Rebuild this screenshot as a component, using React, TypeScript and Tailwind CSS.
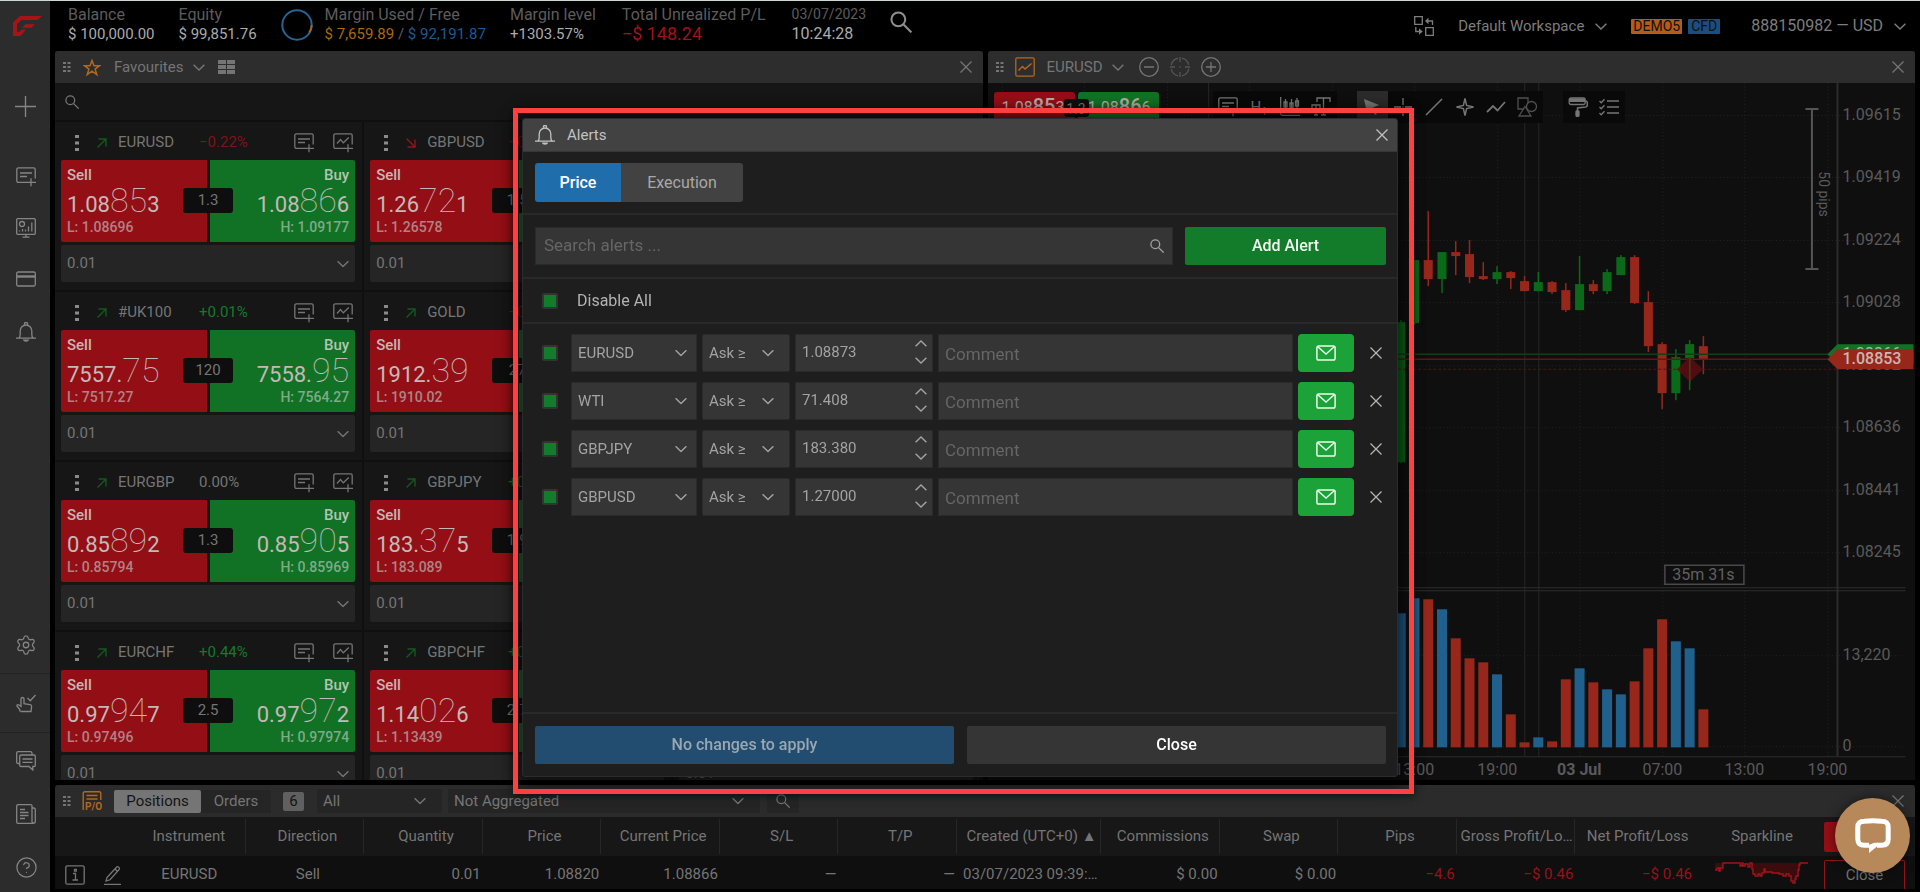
import React from 'react';
import { CircleHelp, Settings } from 'lucide-react';

type IconProps = { className?: string; children?: React.ReactNode };

const Icon = ({ className = 'size-5', children }: IconProps) => (
  <svg
    viewBox="0 0 20 20"
    className={`shrink-0 ${className}`}
    fill="none"
    stroke="currentColor"
    strokeWidth="1.3"
    aria-hidden="true"
  >
    {children}
  </svg>
);

const ChevronIcon = ({ className = '' }: { className?: string }) => (
  <svg viewBox="0 0 12 7" className={`w-3 h-[7px] shrink-0 ${className}`} fill="none" stroke="currentColor" strokeWidth="1.4" aria-hidden="true">
    <path d="M.6 .7l5.4 5.3 5.4-5.3" />
  </svg>
);

const CloseIcon = () => (
  <svg viewBox="0 0 12 12" className="size-3 shrink-0" fill="none" stroke="currentColor" strokeWidth="1.3" aria-hidden="true">
    <path d="M.5 .5l11 11M11.5 .5l-11 11" />
  </svg>
);

const SearchIcon = ({ className = 'size-[14px]' }: { className?: string }) => (
  <svg viewBox="0 0 14 14" className={`shrink-0 ${className}`} fill="none" stroke="currentColor" strokeWidth="1.3" aria-hidden="true">
    <circle cx="5.3" cy="5.3" r="4.4" />
    <path d="M8.6 8.6l5 5" />
  </svg>
);

const NoteIcon = () => (
  <Icon>
    <path d="M11.5 15.4H2.4A1.6 1.6 0 0 1 .8 13.8V2.4A1.6 1.6 0 0 1 2.4.8h15.2a1.6 1.6 0 0 1 1.6 1.6v9" />
    <path d="M4 6h12M4 9.5h7" />
    <path d="M15 11.3v8M11 15.4h9" />
  </Icon>
);

const ChartPlusIcon = () => (
  <Icon>
    <path d="M11.5 15.4H2.4A1.6 1.6 0 0 1 .8 13.8V2.4A1.6 1.6 0 0 1 2.4.8h15.2a1.6 1.6 0 0 1 1.6 1.6v9" />
    <path d="M4 10.5l3.5-4 2.8 3.3 5.5-5.3" />
    <path d="M15 11.3v8M11 15.4h9" />
  </Icon>
);

const BellIcon = () => (
  <Icon>
    <path d="M0 16.2h20M3 16c.9-1 1.2-2 1.2-3.5V8.8a5.8 5.8 0 0 1 11.6 0v3.7c0 1.5.3 2.5 1.2 3.5" />
    <path d="M8.5 2.7V1.5a1.5 1 0 0 1 3 0v1.2" />
    <path d="M6.8 17.6h6.4c-.6 1.5-1.6 2.2-3.2 2.2s-2.6-.7-3.2-2.2z" fill="currentColor" stroke="none" />
  </Icon>
);

const GripIcon = () => (
  <svg viewBox="0 0 8 11" className="w-2 h-[11px] shrink-0" fill="currentColor" aria-hidden="true">
    {[0, 4, 8].map((y) => (
      <g key={y}>
        <rect x="0" y={y} width="3" height="2" />
        <rect x="4.5" y={y} width="3" height="2" />
      </g>
    ))}
  </svg>
);

const DotsIcon = () => (
  <svg viewBox="0 0 4 16" className="w-1 h-4" fill="currentColor" aria-hidden="true">
    <rect y="0" width="4" height="3" />
    <rect y="6.5" width="4" height="3" />
    <rect y="13" width="4" height="3" />
  </svg>
);

const MailIcon = () => (
  <Icon>
    <rect x=".9" y="3" width="18.2" height="14" rx="1.8" strokeWidth="1.5" />
    <path d="M1.5 3.5L10 11l8.5-7.5" strokeWidth="1.5" />
  </Icon>
);

type DropdownProps = { label: string; value: string; className: string; chevron: string };

const Dropdown = ({ label, value, className, chevron }: DropdownProps) => (
  <div className={`relative ${className}`}>
    <select aria-label={label} defaultValue={value} className="size-full appearance-none bg-transparent pl-[6px] outline-none">
      <option>{value}</option>
    </select>
    <ChevronIcon className={`pointer-events-none absolute top-1/2 -translate-y-1/2 ${chevron}`} />
  </div>
);

/* ---------- sidebar ---------- */

const Sidebar = () => (
  <aside className="flex w-[50px] shrink-0 flex-col bg-[#2c2c2c] text-[#858585]">
    <a href="#home" aria-label="Home" className="flex h-[60px] items-start pt-[14px] pl-[12px]">
      <svg viewBox="0 0 30 22" className="w-[30px] h-[22px]" fill="#a81319" aria-hidden="true">
        <path d="M8 1h22l-4.5 4H9.5L5 9v8h2.500l2-2.200h4.500L8.500 21H1V7.500z" />
        <path d="M13.500 9.200h9.500l-3.500 3.600h-9.500z" />
      </svg>
    </a>
    <button aria-label="Add" className="flex h-[90px] items-center justify-center">
      <Icon className="size-[21px]"><path d="M10 0v20M0 10h20" /></Icon>
    </button>
    <button aria-label="New order" className="flex h-[51px] items-center justify-center pl-0.5"><NoteIcon /></button>
    <button aria-label="Reports" className="flex h-[51px] items-center justify-center pl-0.5">
      <Icon>
        <rect x=".7" y=".7" width="18.6" height="15.6" rx="1" />
        <circle cx="6" cy="6" r="2.5" />
        <path d="M3.5 13.5v-1M6.5 13.5v-2.5M9.5 13.5v-2M12.5 13.5V8.5M15.8 13.5V4.5M10 16.5V19M6.5 19.2h7" />
      </Icon>
    </button>
    <button aria-label="Payments" className="flex h-[51px] items-center justify-center pl-0.5">
      <Icon>
        <rect x=".7" y="3" width="18.6" height="14" rx="1.5" />
        <path d="M1 7.5h18" strokeWidth="2.4" />
      </Icon>
    </button>
    <button aria-label="Alerts" className="flex h-[55px] items-center justify-center pl-0.5"><BellIcon /></button>
    <button aria-label="Settings" className="mt-auto flex h-[58px] items-center justify-center border-b border-[#222] pl-0.5">
      <Settings size={22} strokeWidth={1.4} />
    </button>
    <button aria-label="One-click trading" className="flex h-[59px] items-center justify-center border-b border-[#222] pl-0.5">
      <Icon>
        <path d="M4.5 18.5H15l.6-5c.1-1-.5-1.700-1.600-1.900L8 10.700V6a1.500 1.500 0 0 0-3 0v7.500L3 12c-1.600-1-2.700.3-1.700 1.500l2.500 3v2" />
        <path d="M11.500 5l2.800 2.700L19.500 2" />
      </Icon>
    </button>
    <button aria-label="Chat" className="flex h-[53px] items-center justify-center pt-[3px] pl-0.5">
      <Icon>
        <path d="M3.5 12.5H2A1.3 1.3 0 0 1 .7 11.2V2A1.3 1.3 0 0 1 2 .7h12.5A1.5 1.5 0 0 1 16 2.2V4" />
        <path d="M5 4h13a1.3 1.3 0 0 1 1.3 1.3v8.9a1.3 1.3 0 0 1-1.3 1.3h-1.2V19l-3.8-3.500H5a1.3 1.3 0 0 1-1.3-1.3V5.300A1.3 1.3 0 0 1 5 4z" />
        <path d="M6.5 8h10M6.5 11.3h10" />
      </Icon>
    </button>
    <button aria-label="News" className="flex h-[53px] items-center justify-center pt-[3px] pl-0.5">
      <Icon>
        <path d="M16 17.5V2A1.3 1.3 0 0 0 14.7.7H2A1.3 1.3 0 0 0 .7 2v16A1.3 1.3 0 0 0 2 19.3h15.3a2 2 0 0 0 2-2V5.5A1.5 1.5 0 0 0 17.8 4H16M16 17.5a1.7 1.7 0 0 0 2 1.6" />
        <path d="M4 5.5h5M4 8.5h8.5M4 11.5h8.5M4 14.5h5" />
      </Icon>
    </button>
    <button aria-label="Help" className="flex h-[53px] items-center justify-center pt-[3px] pl-0.5">
      <CircleHelp size={23} strokeWidth={1.3} />
    </button>
  </aside>
);

/* ---------- account bar ---------- */

const Stat = ({ label, children }: { label: string; children: React.ReactNode }) => (
  <div>
    <div className="text-base leading-[19px] text-[#5c5c5c]">{label}</div>
    <div className="text-[15px] leading-5 text-[#ababab]">{children}</div>
  </div>
);

const AccountBar = () => (
  <header className="flex h-[50px] shrink-0 items-start gap-6 pt-1 pr-[9px] pl-[13px] whitespace-nowrap">
    <Stat label="Balance">$ 100,000.00</Stat>
    <Stat label="Equity">$ 99,851.76</Stat>
    <div className="flex gap-3">
      <svg viewBox="0 0 32 32" className="mt-1 size-8" fill="none" strokeWidth="2" aria-hidden="true">
        <circle cx="16" cy="16" r="14.7" stroke="#256494" />
        <path d="M30.7 16a14.7 14.7 0 0 1-2.5 7.5" stroke="#a4640f" />
      </svg>
      <Stat label="Margin Used / Free">
        <span className="text-[#a86a0c]">$ 7,659.89</span>
        <span className="text-[#5c5c5c]"> / </span>
        <span className="text-[#1c5a94]">$ 92,191.87</span>
      </Stat>
    </div>
    <div className="flex gap-[26px]">
      <Stat label="Margin level">+1303.57%</Stat>
      <Stat label="Total Unrealized P/L">
        <span className="text-lg leading-5 text-[#a01218]">−$ 148.24</span>
      </Stat>
      <div>
        <div className="text-sm leading-[19px] text-[#5c5c5c]">03/07/2023</div>
        <div className="text-base leading-5 text-[#ababab]">10:24:28</div>
      </div>
    </div>
    <button aria-label="Search" className="mt-[6px] text-[#8f8f8f]"><SearchIcon className="size-[22px]" /></button>
    <div className="ml-auto flex h-[42px] items-center text-[15px] text-[#7d7d7d]">
      <button aria-label="Workspaces">
        <Icon>
          <path d="M.7.7h7.6v7.6H.7zM11.7 11.7h7.6v7.6h-7.6z" />
          <path d="M18.5 9V5H13M1.8 11v4.500h5" />
          <path d="M14.500 1.800v6.400L11 5zM5 12.300v6.400l3.700-3.200z" fill="currentColor" stroke="none" />
        </Icon>
      </button>
      <button className="ml-6 flex items-center gap-[11px]">Default Workspace <ChevronIcon /></button>
      <span className="ml-6 flex h-[15px] items-center rounded-[1px] bg-[#b45c18] px-[2px] text-sm text-[#111]">DEMO5</span>
      <span className="ml-[6px] flex h-[15px] items-center rounded-[1px] bg-[#1a4e80] px-[3px] text-sm text-[#111]">CFD</span>
      <button className="ml-[31px] flex items-center gap-[11px] text-base">888150982 — USD <ChevronIcon /></button>
    </div>
  </header>
);

/* ---------- watchlist ---------- */

type Quote = {
  name: string;
  up: boolean;
  change: string;
  spread: string;
  sell: [string, string, string];
  buy: [string, string, string];
  low: string;
  high: string;
};

const quotes: Quote[] = [
  { name: 'EURUSD', up: true, change: '−0.22%', spread: '1.3', sell: ['1.08', '85', '3'], buy: ['1.08', '86', '6'], low: '1.08696', high: '1.09177' },
  { name: 'GBPUSD', up: false, change: '−0.12%', spread: '1.5', sell: ['1.26', '72', '1'], buy: ['1.26', '73', '6'], low: '1.26578', high: '1.27120' },
  { name: 'USDJPY', up: true, change: '+0.18%', spread: '1.4', sell: ['144.', '60', '2'], buy: ['144.', '61', '6'], low: '144.220', high: '144.910' },
  { name: '#UK100', up: true, change: '+0.01%', spread: '120', sell: ['7557.', '75', ''], buy: ['7558.', '95', ''], low: '7517.27', high: '7564.27' },
  { name: 'GOLD', up: true, change: '−0.39%', spread: '27', sell: ['1912.', '39', ''], buy: ['1912.', '66', ''], low: '1910.02', high: '1922.40' },
  { name: 'WTI', up: true, change: '+0.51%', spread: '4.0', sell: ['71.', '36', '8'], buy: ['71.', '40', '8'], low: '70.120', high: '71.760' },
  { name: 'EURGBP', up: true, change: '0.00%', spread: '1.3', sell: ['0.85', '89', '2'], buy: ['0.85', '90', '5'], low: '0.85794', high: '0.85969' },
  { name: 'GBPJPY', up: true, change: '+0.09%', spread: '1.9', sell: ['183.', '37', '5'], buy: ['183.', '39', '4'], low: '183.089', high: '183.880' },
  { name: 'EURJPY', up: true, change: '−0.04%', spread: '1.6', sell: ['157.', '41', '2'], buy: ['157.', '42', '8'], low: '157.100', high: '157.990' },
  { name: 'EURCHF', up: true, change: '+0.44%', spread: '2.5', sell: ['0.97', '94', '7'], buy: ['0.97', '97', '2'], low: '0.97496', high: '0.97974' },
  { name: 'GBPCHF', up: true, change: '+0.43%', spread: '2.7', sell: ['1.14', '02', '6'], buy: ['1.14', '05', '3'], low: '1.13439', high: '1.14170' },
  { name: 'USDCHF', up: true, change: '+0.62%', spread: '1.8', sell: ['0.89', '97', '1'], buy: ['0.89', '98', '9'], low: '0.89510', high: '0.90020' },
];

const changeColor = (change: string) => {
  if (change.startsWith('−')) return 'text-[#7d1418]';
  return change.startsWith('+') ? 'text-[#157a2c]' : 'text-[#757575]';
};

const Price = ({ parts }: { parts: [string, string, string] }) => (
  <span className="block h-[30px] text-[22px] leading-[30px] text-[#c4b9b9]">
    {parts[0]}
    <span className="text-[34px] leading-[30px] font-thin">{parts[1]}</span>
    {parts[2]}
  </span>
);

const QuoteTile = ({ quote }: { quote: Quote }) => (
  <div className="h-[170px] border-r-2 border-b-2 border-[#0f0f0f] pr-[7px] pl-[6px]">
    <div className="flex h-[38px] items-center pt-[3px] text-[15px] text-[#757575]">
      <button aria-label={`${quote.name} menu`} className="flex w-[31px] justify-center text-[#8a8a8a]"><DotsIcon /></button>
      <svg viewBox="0 0 10 10" className={`mr-[11px] ml-[5px] size-[10px] ${quote.up ? 'text-[#14581f]' : 'text-[#93141a]'}`} fill="none" stroke="currentColor" strokeWidth="1.4" aria-hidden="true">
        <path d={quote.up ? 'M.5 9.5l8.5-8.5M1.5 1H9v7.5' : 'M.5 .5L9 9M9 1.5V9H1.5'} />
      </svg>
      <span className="w-[81px]">{quote.name}</span>
      <span className={changeColor(quote.change)}>{quote.change}</span>
      <button aria-label={`New ${quote.name} order`} className="mr-[19px] ml-auto"><NoteIcon /></button>
      <button aria-label={`Open ${quote.name} chart`} className="mr-[2px]"><ChartPlusIcon /></button>
    </div>
    <div className="relative grid h-[82px] grid-cols-2 gap-[3px]">
      <button className="flex flex-col items-start rounded-l-[2px] bg-[#940f15] pt-[5px] pl-[6px]">
        <span className="text-[15px] leading-5 font-medium text-[#c9b5b5]">Sell</span>
        <Price parts={quote.sell} />
        <span className="text-sm leading-6 font-medium text-[#b08285]">L: {quote.low}</span>
      </button>
      <button className="flex flex-col items-end rounded-r-[2px] bg-[#117225] pt-[5px] pr-[6px]">
        <span className="text-[15px] leading-5 font-medium text-[#b0c6b4]">Buy</span>
        <Price parts={quote.buy} />
        <span className="text-sm leading-6 font-medium text-[#7fab88]">H: {quote.high}</span>
      </button>
      <span className="absolute top-7 left-1/2 flex h-[25px] w-[50px] -translate-x-1/2 items-center justify-center rounded-[3px] bg-[#0e0e0e] text-[15px] text-[#757575]">
        {quote.spread}
      </span>
    </div>
    <Dropdown
      label={`${quote.name} volume`}
      value="0.01"
      className="mt-[3px] h-[37px] rounded-[2px] bg-[#252525] text-[15px] text-[#757575]"
      chevron="right-[6px]"
    />
  </div>
);

const Watchlist = () => (
  <section aria-label="Favourites" className="flex min-h-0 flex-col overflow-hidden rounded-t-[3px] bg-[#161616]">
    <div className="flex h-8 shrink-0 items-center bg-[#2d2d2d] px-2 text-[15px] text-[#757575]">
      <GripIcon />
      <svg viewBox="0 0 18 17" className="ml-3 h-[17px] w-[18px]" fill="none" stroke="#b4681f" strokeWidth="1.5" aria-hidden="true">
        <path d="M9 1.5l2 5.2h5.6l-4.5 3.4 1.7 5.5L9 12.2l-4.800 3.400 1.700-5.500L1.400 6.700H7z" />
      </svg>
      <button className="ml-[13px] flex items-center gap-[10px]">Favourites <ChevronIcon /></button>
      <button aria-label="Layout" className="ml-[13px]">
        <svg viewBox="0 0 17 14" className="h-[14px] w-[17px]" fill="currentColor" aria-hidden="true">
          <path d="M0 0h8v4H0zM9 0h8v4H9zM0 5h8v4H0zM9 5h8v4H9zM0 10h8v4H0zM9 10h8v4H9z" />
        </svg>
      </button>
      <button aria-label="Close favourites" className="mr-[3px] ml-auto"><CloseIcon /></button>
    </div>
    <div className="flex h-[39px] shrink-0 items-center border-b-2 border-[#0f0f0f] pl-[10px] text-[#757575]">
      <SearchIcon />
      <input aria-label="Search instruments" className="ml-2 w-full bg-transparent outline-none" />
    </div>
    <div className="grid min-h-0 grid-cols-3 overflow-hidden">
      {quotes.map((quote) => (
        <QuoteTile key={quote.name} quote={quote} />
      ))}
    </div>
  </section>
);

/* ---------- chart ---------- */

const RED = '#96271a';
const GREEN = '#0b6a19';
const BLUE = '#20608d';

// [up, high, low, body top, body bottom, volume top, volume colour]
const bars: [boolean, number, number, number, number, number, string][] = [
  [true, 237, 380, 239, 379, 530, BLUE],
  [true, 177, 242, 177, 240, 515, BLUE],
  [false, 128, 203, 177, 196, 516, RED],
  [true, 169, 210, 169, 196, 526, BLUE],
  [false, 158, 192, 169, 173, 555, RED],
  [false, 157, 200, 171, 194, 575, RED],
  [false, 179, 197, 193, 196, 579, RED],
  [true, 183, 201, 189, 196, 591, BLUE],
  [false, 188, 206, 189, 195, 631, RED],
  [false, 193, 208, 198, 208, 659, RED],
  [true, 189, 208, 199, 208, 654, BLUE],
  [false, 198, 211, 199, 209, 658, RED],
  [false, 200, 229, 207, 227, 596, RED],
  [true, 173, 227, 201, 227, 585, BLUE],
  [false, 197, 211, 201, 208, 599, RED],
  [true, 186, 211, 189, 208, 606, BLUE],
  [true, 172, 192, 174, 192, 611, BLUE],
  [false, 172, 221, 174, 220, 598, RED],
  [false, 208, 269, 219, 263, 565, RED],
  [false, 259, 326, 261, 310, 536, RED],
  [true, 266, 317, 274, 310, 558, BLUE],
  [true, 257, 307, 261, 275, 565, BLUE],
  [false, 253, 291, 263, 276, 626, RED],
];

const priceLabels: [string, number][] = [
  ['1.09615', 32],
  ['1.09419', 94],
  ['1.09224', 157],
  ['1.09028', 219],
  ['1.08832', 282],
  ['1.08636', 344],
  ['1.08441', 407],
  ['1.08245', 469],
  ['13,220', 572],
  ['0', 663],
];

const timeLabels: [string, number][] = [
  ['13:00', 426],
  ['19:00', 509],
  ['03 Jul', 591],
  ['07:00', 674],
  ['13:00', 756],
  ['19:00', 839],
];

const gridColumns = [14, 96, 179, 261, 344, 426, 509, 591, 674, 756, 839];

const PriceChart = () => (
  <svg viewBox="0 0 927 697" preserveAspectRatio="xMaxYMin slice" className="size-full" fontSize="16" role="img" aria-label="EURUSD hourly chart">
    <g stroke="#242424" strokeDasharray="1 2.5">
      {gridColumns.map((x) => (
        <path key={x} d={`M${x + 0.5} 0V673`} />
      ))}
      {priceLabels.map(([label, y]) => (
        <path key={label} d={`M0 ${y + 0.5}H917`} />
      ))}
    </g>
    <path d="M220.5 0V673M536.5 0V673M550.5 0V673" stroke="#272727" />
    <path d="M849 0V673" stroke="#2c2c2c" strokeWidth="2" />
    <path d="M0 504.5H917M0 507.5H917" stroke="#2e2e2e" />
    <path d="M0 673.5H917" stroke="#2c2c2c" />
    {bars.map(([up, high, low, top, bottom, volume, fill], i) => {
      const x = 412.5 + i * 13.75;
      return (
        <g key={i} fill={up ? GREEN : RED}>
          <rect x={x - 0.75} y={high} width="1.5" height={low - high} />
          <rect x={x - 4.5} y={top} width="9" height={bottom - top} />
          <rect x={x - 5} y={volume} width="10" height={664 - volume} fill={fill} />
        </g>
      );
    })}
    <path d="M0 271H840" stroke="#123f19" strokeWidth="1.5" />
    <path d="M0 276H840" stroke="#5b1a13" strokeWidth="1.5" />
    <path d="M0 286H849" stroke="#5a1216" strokeDasharray="3 2" />
    <path d="M701.500 273.500l13 12.500-13 12.500-13-12.500z" fill="#5c0d12" fillOpacity=".85" />
    <path d="M701.5 273V299" stroke="#4a4a15" />
    <path d="M817 26h13M817 186h13M823.5 26V186" stroke="#555" strokeWidth="2" fill="none" />
    <text transform="translate(831 111) rotate(90)" fill="#5a5a5a" fontSize="14" textAnchor="middle">50 pips</text>
    <g fill="#5a5a5a">
      {priceLabels.map(([label, y]) => (
        <text key={label} x="854" y={y + 5}>{label}</text>
      ))}
      {timeLabels.map(([label, x]) => (
        <text key={x} x={x} y="692" textAnchor="middle" fontWeight={label === '03 Jul' ? 700 : 400}>{label}</text>
      ))}
    </g>
    <rect x="676.5" y="482" width="79" height="19" fill="#0f0f0f" stroke="#4a4a4a" strokeWidth="1.5" />
    <text x="684" y="497" fill="#606060">35m 31s</text>
    <path d="M839 271l10-10h76v20h-76z" fill="#117225" />
    <text x="854" y="276" fill="#a9b9ab">1.08866</text>
    <path d="M839 276l10-10h76v20h-76z" fill="#96271a" />
    <text x="854" y="281" fill="#cdb5b2" fontWeight="500">1.08853</text>
  </svg>
);

const ToolButton = ({ label, active, children }: { label: string; active?: boolean; children: React.ReactNode }) => (
  <button aria-label={label} className={`flex h-8 w-[31px] items-center justify-center ${active ? 'bg-[#2b2b2b]' : ''}`}>
    {children}
  </button>
);

const ChartToolbar = () => (
  <div className="absolute top-2 left-[225px] flex gap-5 text-[#757575]">
    <div className="flex bg-[#090909]">
      <ToolButton label="Order ticket"><NoteIcon /></ToolButton>
      <ToolButton label="Timeframe"><span className="text-[15px]">H<sub>1</sub></span></ToolButton>
      <ToolButton label="Chart type">
        <Icon>
          <path d="M.7 0v16.5a1.8 1.8 0 0 0 1.8 1.8H20" />
          <path d="M4 5h3v5H4zM10 6h3v5h-3zM15.5 4h3v5h-3zM5.5 2v11M11.5 2v12M17 1v12" />
        </Icon>
      </ToolButton>
      <ToolButton label="Text size">
        <Icon><path d="M6 5V1h13v4M12.5 1v17M10 18h5M1 11V8h8v3M5 8v10M3 18h4" /></Icon>
      </ToolButton>
    </div>
    <div className="flex bg-[#090909]">
      <ToolButton label="Select" active>
        <Icon><path d="M2 2l15 6-6 2.500L15 17l-2 1-4-6-4 4z" fill="currentColor" stroke="none" /></Icon>
      </ToolButton>
      <ToolButton label="Crosshair"><Icon><path d="M10 1v7M10 12v7M1 10h7M12 10h7M10 9.5v1" /></Icon></ToolButton>
      <ToolButton label="Trend line"><Icon><path d="M2 18L18 2" strokeWidth="1.6" /></Icon></ToolButton>
      <ToolButton label="Markers">
        <Icon><path d="M10 1.5l1.6 6.900L18.500 10l-6.900 1.600L10 18.500l-1.600-6.900L1.500 10l6.900-1.600z" strokeWidth="1.5" /></Icon>
      </ToolButton>
      <ToolButton label="Indicators"><Icon><path d="M1 15l6-6 4.5 4.5L19 5" strokeWidth="1.8" /></Icon></ToolButton>
      <ToolButton label="Shapes">
        <Icon className="size-5 text-[#4f4f4f]">
          <path d="M7 12H1V1h10v5" />
          <circle cx="14.5" cy="9.5" r="5" />
          <path d="M8 9.5l6 9.5H2z" />
        </Icon>
      </ToolButton>
    </div>
    <div className="flex bg-[#090909]">
      <ToolButton label="Style">
        <Icon>
          <rect x="1.2" y="1" width="16" height="6.5" rx="1.8" />
          <path d="M1.5 1.500h15.500v3.500H1.500z" fill="currentColor" stroke="none" />
          <path d="M17.500 4c1.200 0 1.800.6 1.800 1.800v2.400c0 1-.6 1.500-1.600 1.700L9.500 11v3" strokeWidth="1.500" />
          <rect x="8" y="14" width="3" height="5.3" rx=".8" fill="currentColor" />
        </Icon>
      </ToolButton>
      <ToolButton label="Objects">
        <Icon>
          <path d="M8 4h12M8 10h12M8 16h12" strokeWidth="1.6" />
          <path d="M.5 4l1.700 1.700L5.500 2.300M.5 10l1.700 1.700 3.300-3.400M.5 16l1.700 1.700 3.300-3.400" />
        </Icon>
      </ToolButton>
    </div>
  </div>
);

const ChartPanel = () => (
  <section aria-label="EURUSD chart" className="flex min-h-0 flex-col overflow-hidden rounded-t-[3px] bg-[#0f0f0f]">
    <div className="flex h-8 shrink-0 items-center bg-[#2d2d2d] px-2 text-[15px] text-[#757575]">
      <GripIcon />
      <Icon className="ml-[11px] size-5 text-[#b4681f]">
        <rect x=".8" y=".8" width="18.4" height="18.4" rx="1.5" />
        <path d="M3.5 13.5l4-4 2.5 2.5 6.500-5.500" strokeWidth="1.5" />
      </Icon>
      <button className="ml-3 flex items-center gap-[10px]">EURUSD <ChevronIcon /></button>
      <button aria-label="Zoom out" className="ml-[15px]"><Icon><circle cx="10" cy="10" r="9.3" /><path d="M5 10h10" /></Icon></button>
      <button aria-label="Centre" className="ml-[11px] text-[#555]">
        <Icon><circle cx="10" cy="10" r="9" strokeDasharray="10 4" strokeDashoffset="-2" /><path d="M10 0v5M10 15v5M0 10h5M15 10h5M10 9.3v1.4" /></Icon>
      </button>
      <button aria-label="Zoom in" className="ml-[11px]"><Icon><circle cx="10" cy="10" r="9.3" /><path d="M5 10h10M10 5v10" /></Icon></button>
      <button aria-label="Close chart" className="mr-[3px] ml-auto"><CloseIcon /></button>
    </div>
    <div className="relative min-h-0 flex-1">
      <PriceChart />
      <div className="absolute top-[9px] left-[6px] flex gap-[3px] text-base leading-6 text-[#b8a9a9]">
        <button className="h-[30px] w-[81px] rounded-[3px] bg-[#940f15] pb-1 pl-2 text-left">1.08<b className="text-xl font-medium">85</b>3</button>
        <button className="h-[30px] w-[81px] rounded-[3px] bg-[#117225] pr-2 pb-1 text-right">1.08<b className="text-xl font-medium">86</b>6</button>
        <span className="absolute top-[7px] left-[70px] w-[25px] rounded-[3px] bg-[#0f0f0f] pt-[2px] text-center text-sm leading-4 text-[#757575]">1.3</span>
      </div>
      <ChartToolbar />
    </div>
  </section>
);

/* ---------- positions ---------- */

const columns = [
  'Instrument', 'Direction', 'Quantity', 'Price', 'Current Price', 'S/L', 'T/P', 'Created (UTC+0) ▲',
  'Commissions', 'Swap', 'Pips', 'Gross Profit/Lo…', 'Net Profit/Loss', 'Sparkline',
];

const position = [
  { value: 'EURUSD', align: 'pl-2 text-center' },
  { value: 'Sell', align: 'pl-2 text-center' },
  { value: '0.01', align: 'text-right' },
  { value: '1.08820', align: 'text-right' },
  { value: '1.08866', align: 'text-right' },
  { value: '—', align: 'text-right' },
  { value: '—', align: 'text-right' },
  { value: '03/07/2023 09:39:…', align: 'pl-[6px]' },
  { value: '$ 0.00', align: 'text-right' },
  { value: '$ 0.00', align: 'text-right' },
  { value: '−4.6', align: 'text-right text-[#93141a]' },
  { value: '−$ 0.46', align: 'text-right text-[#93141a]' },
  { value: '−$ 0.46', align: 'text-right text-[#93141a]' },
];

const SPARK = 'M0 8h2V6h2v3h1V6h3V1h17v3h2V1h1v3h2V2h3v3h2V1h2v6h1v5h2v2h3v-2h2v2h2v-3h2V7h1v3h7v1h7v1h4v2h3v-2h3v2h2v5h2v2h2v-4h1v-3h2V8h1V3h1V1h9';

const PositionsPanel = () => (
  <section aria-label="Positions" className="shrink-0 overflow-hidden rounded-t-[3px] bg-[#0f0f0f] text-[15px] text-[#757575]">
    <div className="flex h-8 items-center bg-[#2b2b2b] px-2">
      <GripIcon />
      <svg viewBox="0 0 20 20" className="ml-[11px] size-5" fill="none" stroke="#b4681f" strokeWidth="1.4" aria-hidden="true">
        <path d="M1.2 19V2.2A1.5 1.5 0 0 1 2.7.7h14.6a1.5 1.5 0 0 1 1.5 1.5V9M4.5 4.5h11M4.5 8h11" />
        <text x="3" y="19" fontSize="10" fontWeight="700" fill="#b4681f" stroke="none">P/O</text>
      </svg>
      <button className="ml-3 h-[23px] w-[87px] rounded-[2px] bg-[#757575] leading-[21px] text-[#141414]">Positions</button>
      <button className="h-[23px] w-[70px] bg-[#252525] leading-[21px]">Orders</button>
      <span className="ml-3 flex h-[19px] w-[21px] items-center justify-center rounded-[2px] bg-[#606060] text-[#141414]">6</span>
      <Dropdown label="Direction filter" value="All" className="ml-[13px] h-6 w-[125px] rounded-[2px] bg-[#252525]" chevron="right-4" />
      <Dropdown label="Aggregation" value="Not Aggregated" className="ml-[6px] h-6 w-[312px] rounded-[2px] bg-[#252525]" chevron="right-4" />
      <button aria-label="Search positions" className="ml-[7px] flex h-6 w-8 items-center justify-center rounded-[2px] bg-[#252525]"><SearchIcon /></button>
      <button aria-label="Close positions" className="mr-[3px] ml-auto"><CloseIcon /></button>
    </div>
    <table className="w-full table-fixed">
      <thead>
        <tr className="h-[39px] bg-[#171717]">
          <td className="w-[72px] p-0" />
          {columns.map((column) => (
            <th
              key={column}
              className={`p-0 font-normal ${column.startsWith('Created') ? 'w-[144px]' : ''} ${column === 'Sparkline' ? 'w-[130px]' : ''}`}
            >
              <div
                className={`flex h-[35px] items-center justify-center whitespace-nowrap ${
                  column.startsWith('Gross') ? 'pl-[2px]' : 'pl-[6px]'
                } ${column.startsWith('Net') || column === 'Sparkline' ? '' : 'border-r border-[#272727]'}`}
              >
                {column}
              </div>
            </th>
          ))}
          <th className="w-[91px] p-0">
            <button aria-label="Close all" className="block h-[30px] w-[81px] rounded-[2px] bg-[#940f15]" />
          </th>
        </tr>
      </thead>
      <tbody>
        <tr className="h-[33px] whitespace-nowrap">
          <td className="p-0">
            <div className="flex items-center gap-[17px] pt-1 pl-[10px]">
              <button aria-label="Details">
                <Icon>
                  <rect x=".8" y=".8" width="18.4" height="18.4" rx="1.5" />
                  <path d="M8 8.5h2.5V15M7.5 15h5.5M9.5 4.3h1.8v1.8H9.5z" />
                </Icon>
              </button>
              <button aria-label="Edit">
                <Icon><path d="M2 19.3h17M5 12.5L14.7 2c1-1 3.600 1 2.600 2.300L8 14.800l-4 1.200zM13 4l2.600 2.400" /></Icon>
              </button>
            </div>
          </td>
          {position.map((cell, i) => (
            <td key={i} className={`p-0 pt-1 pr-[2px] ${cell.align}`}>{cell.value}</td>
          ))}
          <td className="p-0 pl-[21px]">
            <svg viewBox="0 0 93 22" className="h-[22px] w-[93px]" aria-hidden="true">
              <path d={`${SPARK}H0z`} transform="scale(1 1)" fill="#3b0b0e" />
              <path d={SPARK} fill="none" stroke="#a3141a" strokeWidth="1.4" />
            </svg>
          </td>
          <td className="p-0 align-bottom">
            <button className="block h-[29px] w-[81px] rounded-t-[2px] border border-b-0 border-[#93141a]">Close</button>
          </td>
        </tr>
      </tbody>
    </table>
  </section>
);

/* ---------- alerts dialog ---------- */

const alerts = [
  { symbol: 'EURUSD', price: '1.08873' },
  { symbol: 'WTI', price: '71.408' },
  { symbol: 'GBPJPY', price: '183.380' },
  { symbol: 'GBPUSD', price: '1.27000' },
];

const checkboxClass = 'size-4 shrink-0 appearance-none rounded-[2px] border border-[#333] bg-[#252525] checked:border-2 checked:bg-[#127c2a]';
const fieldClass = 'h-[38px] border border-[#2a2a2a] bg-[#353535] text-[#a3a3a3]';

const AlertRow = ({ symbol, price }: { symbol: string; price: string }) => (
  <div className="flex items-center gap-[5px] text-[15px]">
    <input type="checkbox" defaultChecked aria-label={`${symbol} alert enabled`} className={`mr-2 ml-[6px] ${checkboxClass}`} />
    <Dropdown label="Instrument" value={symbol} className={`w-[126px] ${fieldClass}`} chevron="right-[9px]" />
    <Dropdown label="Condition" value="Ask ≥" className={`w-[88px] rounded-[2px] ${fieldClass}`} chevron="right-[15px]" />
    <div className={`flex w-[138px] items-center justify-between pr-[5px] pl-[6px] ${fieldClass}`}>
      <input aria-label="Price" defaultValue={price} className="w-24 bg-transparent pb-px outline-none" />
      <div className="flex flex-col gap-[10px] pb-[2px]">
        <button aria-label="Increase" className="flex"><ChevronIcon className="rotate-180" /></button>
        <button aria-label="Decrease" className="flex"><ChevronIcon /></button>
      </div>
    </div>
    <input aria-label="Comment" placeholder="Comment" className={`min-w-0 flex-1 px-[6px] pt-[2px] text-[17px] outline-none placeholder:text-[#666] ${fieldClass}`} />
    <button aria-label="Notify by email" className="flex h-[38px] w-14 items-center justify-center rounded-[4px] bg-[#1ba238] text-[#eefbe8]"><MailIcon /></button>
    <button aria-label="Remove alert" className="mr-[10px] ml-[6px] p-[5px] text-[#b3b3b3]"><CloseIcon /></button>
  </div>
);

const AlertsDialog = () => (
  <div className="fixed inset-0 flex items-center justify-center pt-[3px]">
    <div
      role="dialog"
      aria-label="Alerts"
      className="relative flex h-[659px] w-[876px] flex-col rounded-[3px] border border-[#2c2c2c] bg-[#1e1e1e] text-base shadow-[0_2px_18px_6px_rgba(0,0,0,0.65)]"
    >
      <div className="pointer-events-none absolute -top-[11px] -right-[17px] -bottom-[18px] -left-[10px] border-[5px] border-[#ff4040] shadow-[0_2px_8px_rgba(0,0,0,0.5)]" />
      <div className="flex h-[33px] shrink-0 items-center rounded-t-[2px] border-b border-[#363636] bg-[#424242] pr-[9px] pl-3 text-[15px] text-[#c2c2c2]">
        <BellIcon />
        <h2 className="ml-3">Alerts</h2>
        <button aria-label="Close dialog" className="ml-auto"><CloseIcon /></button>
      </div>
      <div className="flex border-b-2 border-[#292929] px-3 pt-[11px] pb-[11px]">
        <button className="h-[39px] w-[86px] rounded-l-[3px] bg-[#206dab] font-medium text-white">Price</button>
        <button className="h-[39px] w-[122px] rounded-r-[3px] bg-[#424242] text-[#a8a8a8]">Execution</button>
      </div>
      <div className="flex gap-3 border-b-2 border-[#292929] py-3 pr-[11px] pl-3">
        <label className={`flex flex-1 items-center pr-2 pl-2 ${fieldClass}`}>
          <input aria-label="Search alerts" placeholder="Search alerts ..." className="flex-1 bg-transparent text-[17px] outline-none placeholder:text-[#666]" />
          <SearchIcon />
        </label>
        <button className="h-[38px] w-[201px] rounded-[2px] bg-[#127c2a] font-medium text-[#f2f7f2]">Add Alert</button>
      </div>
      <label className="flex h-[45px] shrink-0 items-center gap-[19px] border-b-2 border-[#292929] pl-[19px] text-[#b3b3b3]">
        <input type="checkbox" defaultChecked className={checkboxClass} />
        Disable All
      </label>
      <div className="flex flex-1 flex-col gap-[10px] pt-[10px] pl-[13px]">
        {alerts.map((alert) => (
          <AlertRow key={alert.symbol} {...alert} />
        ))}
      </div>
      <div className="grid grid-cols-2 gap-[13px] border-t-2 border-[#292929] py-3 pr-[11px] pl-3">
        <button className="h-[38px] rounded-[2px] bg-[#224d70] font-medium text-[#9aa7b1]">No changes to apply</button>
        <button className="h-[38px] rounded-[2px] bg-[#353535] font-medium text-white">Close</button>
      </div>
    </div>
  </div>
);

const ChatButton = () => (
  <button aria-label="Open chat" className="fixed right-[10px] bottom-[19px] flex size-[75px] items-center justify-center rounded-full bg-[#b6885a] shadow-[0_0_12px_rgba(0,0,0,0.5)]">
    <svg viewBox="0 0 36 36" className="size-9" fill="none" stroke="#fff" strokeWidth="5" aria-hidden="true">
      <path d="M14 27.3H9.5C5 27.3 2.8 25.5 2.8 21V9.5C2.8 5 5 3.3 9.5 3.3Q18 2.3 26.5 3.3C31 3.3 33.2 5 33.2 9.5V21c0 4.500-2.200 6.300-6.700 6.300H22" />
      <path d="M14 24.8V35l9.500-7.700V24.800h-4l-5.500 2z" fill="#fff" stroke="none" />
    </svg>
  </button>
);

const App: React.FC = () => (
  <div className="flex h-screen overflow-hidden border-t border-[#cfd6d3] bg-black font-['Roboto',sans-serif]">
    <Sidebar />
    <main className="flex min-w-0 flex-1 flex-col px-[5px] pb-[3px]">
      <AccountBar />
      <div className="grid min-h-0 flex-1 grid-cols-2 gap-[5px] pb-[5px]">
        <Watchlist />
        <ChartPanel />
      </div>
      <PositionsPanel />
    </main>
    <AlertsDialog />
    <ChatButton />
  </div>
);

export default App;
